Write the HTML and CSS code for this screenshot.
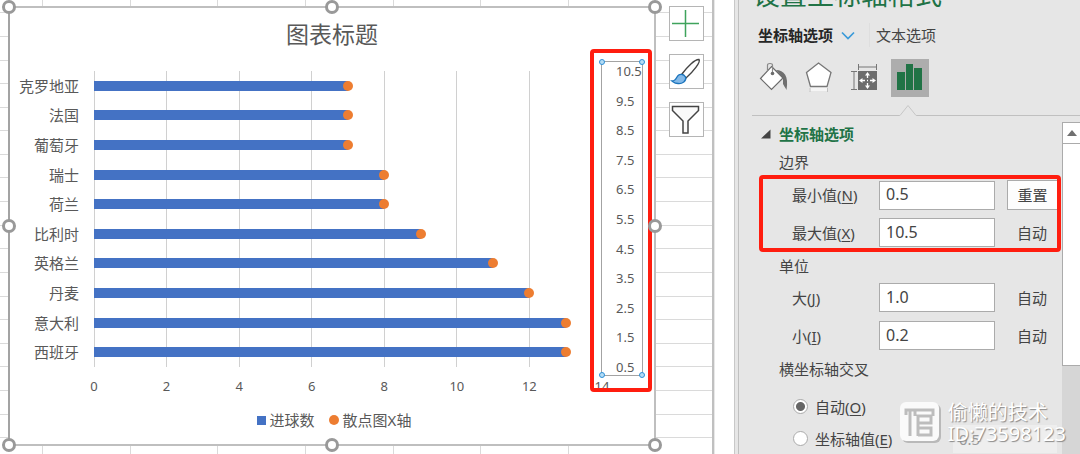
FILE: index.html
```html
<!DOCTYPE html>
<html lang="zh-CN">
<head>
<meta charset="utf-8">
<title>设置坐标轴格式</title>
<link rel="stylesheet" href="styles.css">
</head>
<body>
<main class="sheet">
  <svg class="sheet-lines" aria-hidden="true">
    <path d="M0 12.500h2000M0 36.500h2000M0 60.500h2000M0 83.500h2000M0 107.500h2000M0 130.500h2000M0 154.500h2000M0 177.500h2000M0 201.500h2000M0 225.500h2000M0 248.500h2000M0 272.500h2000M0 296.500h2000M0 319.500h2000M0 343.500h2000M0 366.500h2000M0 390.500h2000M0 414.500h2000M0 437.500h2000M42.500 0v2000M130.500 0v2000M217.500 0v2000M305.500 0v2000M393.500 0v2000M480.500 0v2000M568.500 0v2000"/>
  </svg>
  <section class="chart">
    <h2 class="chart-title">图表标题</h2>
    <div class="plot-row">
      <div class="categories">
        <span>克罗地亚</span><span>法国</span><span>葡萄牙</span><span>瑞士</span><span>荷兰</span>
        <span>比利时</span><span>英格兰</span><span>丹麦</span><span>意大利</span><span>西班牙</span>
      </div>
      <div class="plot">
        <div class="rules"><i></i><i></i><i></i><i></i><i></i><i></i><i></i><i></i></div>
        <div class="track"><div class="bar" style="width:50%"></div></div>
        <div class="track"><div class="bar" style="width:50%"></div></div>
        <div class="track"><div class="bar" style="width:50%"></div></div>
        <div class="track"><div class="bar" style="width:57.143%"></div></div>
        <div class="track"><div class="bar" style="width:57.143%"></div></div>
        <div class="track"><div class="bar" style="width:64.286%"></div></div>
        <div class="track"><div class="bar" style="width:78.571%"></div></div>
        <div class="track"><div class="bar" style="width:85.714%"></div></div>
        <div class="track"><div class="bar" style="width:92.857%"></div></div>
        <div class="track"><div class="bar" style="width:92.857%"></div></div>
      </div>
      <div class="value-axis">
        <span>10.5</span><span>9.5</span><span>8.5</span><span>7.5</span><span>6.5</span><span>5.5</span><span>4.5</span><span>3.5</span><span>2.5</span><span>1.5</span><span>0.5</span>
        <div class="axis-selection"><i class="dot tl"></i><i class="dot tr"></i><i class="dot bl"></i><i class="dot br"></i></div>
        <div class="axis-frame"></div>
      </div>
    </div>
    <div class="x-axis"><span>0</span><span>2</span><span>4</span><span>6</span><span>8</span><span>10</span><span>12</span><span>14</span></div>
    <div class="legend">
      <span class="key"><i class="swatch square"></i>进球数</span>
      <span class="key"><i class="swatch round"></i>散点图X轴</span>
    </div>
    <i class="handle top left"></i><i class="handle top center"></i><i class="handle top right"></i>
    <i class="handle middle left"></i><i class="handle middle right"></i>
    <i class="handle bottom left"></i><i class="handle bottom center"></i><i class="handle bottom right"></i>
  </section>
  <div class="chart-tools">
    <button type="button" aria-label="图表元素"><svg width="33" height="33" viewBox="0 0 33 33"><path d="M15.500 3v27M2 16.500h27" stroke="#3fa35c" stroke-width="1.500"/></svg></button>
    <button type="button" aria-label="图表样式"><svg width="33" height="33" viewBox="0 0 33 33"><path d="M12 19C17 12 25 4 29 4.500C31 7 23 17 16 23Z" fill="#fff" stroke="#444" stroke-width="1.400"/><path d="M2 26C5 26 6 24 7 22C9 18 14 19 15.500 22C17 26 12 29 8 28.500C5 28.500 4 27.500 2 26Z" fill="#83b9e8" stroke="#1b74bc" stroke-width="1.300"/></svg></button>
    <button type="button" aria-label="图表筛选器"><svg width="33" height="33" viewBox="0 0 33 33"><path d="M2.500 3.500h26v4L18 18v12h-5V18L2.500 7.500Z" fill="#fafafa" stroke="#444" stroke-width="1.500"/></svg></button>
  </div>
</main>
<div class="splitter"></div>
<aside class="panel">
  <h1 class="panel-title">设置坐标轴格式</h1>
  <nav class="tabs">
    <button type="button" class="tab active">坐标轴选项<svg width="14" height="9" viewBox="0 0 14 9"><path d="M1 1.500L7 7.500L13 1.500" fill="none" stroke="#3a9ad9" stroke-width="1.700"/></svg></button>
    <button type="button" class="tab">文本选项</button>
  </nav>
  <div class="icon-tabs">
    <button type="button" aria-label="填充与线条"><svg width="38" height="38" viewBox="0 0 38 38"><path d="M17 11C25 11 30 17 27.500 31C26 28 25 27 24 25L24 19Z" fill="#707070"/><path d="M12.500 7.500L24 19L12.500 30.500L1.500 19.500Z" fill="#fff" stroke="#6b6b6b" stroke-width="1.200"/><path d="M8.500 12V6C8.500 4 13.500 4 13.500 6V14" fill="none" stroke="#8a8a8a" stroke-width="1.200"/><circle cx="13.500" cy="14.500" r="1.800" fill="#6b6b6b"/></svg></button>
    <button type="button" aria-label="效果"><svg width="38" height="38" viewBox="0 0 38 38"><path d="M7 28H24L25 32H6Z" fill="#f5f5f5"/><path d="M15.500 4L28 13.500L24 27.500H7.500L3.500 13.500Z" fill="#fff" stroke="#777" stroke-width="1.300"/><path d="M7 29v4M24.500 29v4" stroke="#c0c0c0"/></svg></button>
    <button type="button" aria-label="大小与属性"><svg width="38" height="38" viewBox="0 0 38 38"><path d="M11.500 5v6M29.500 5v6M11.500 8h18M4 12.500h6M4 30.500h6M7 12.500v18" fill="none" stroke="#777"/><path d="M11 12h19v19H11Z" fill="#6d6d6d"/><path d="M20.500 15v4M20.500 24v4M14 21.500h4M23 21.500h4M20 21.500h1" fill="none" stroke="#fff" stroke-width="1.300"/><path d="M20.500 13l2.500 3.500h-5ZM20.500 30l2.500-3.500h-5ZM12 21.500l3.500-2.500v5ZM29 21.500l-3.500-2.500v5Z" fill="#fff"/></svg></button>
    <button type="button" class="selected" aria-label="坐标轴选项"><svg width="38" height="38" viewBox="0 0 38 38"><path d="M6 13h8v18H6ZM15 5h7v26h-7ZM23 9h8v22h-8Z" fill="#217346"/></svg></button>
  </div>
  <div class="divider"><i></i><svg width="18" height="12" viewBox="0 0 18 12"><path d="M0 11.500H1L9 1.500L17 11.500H18" fill="#e6e6e6" stroke="#c6c6c6"/></svg><i class="rest"></i></div>
  <div class="panel-body">
    <form class="options">
      <h3 class="section"><svg width="10" height="10" viewBox="0 0 10 10"><path d="M9.500 .500V9.500H0Z" fill="#444"/></svg>坐标轴选项</h3>
      <h4 class="group-title">边界</h4>
      <div class="fields marked">
        <div class="field"><label for="min">最小值(<u>N</u>)</label><input id="min" type="text" value="0.5"><button type="button" class="reset">重置</button></div>
        <div class="field"><label for="max">最大值(<u>X</u>)</label><input id="max" type="text" value="10.5"><span class="auto">自动</span></div>
      </div>
      <h4 class="group-title">单位</h4>
      <div class="fields">
        <div class="field"><label for="major">大(<u>J</u>)</label><input id="major" type="text" value="1.0"><span class="auto">自动</span></div>
        <div class="field"><label for="minor">小(<u>I</u>)</label><input id="minor" type="text" value="0.2"><span class="auto">自动</span></div>
      </div>
      <h4 class="group-title">横坐标轴交叉</h4>
      <div class="choices">
        <div class="choice"><input id="cross-auto" type="radio" name="cross" checked><label for="cross-auto">自动(<u>O</u>)</label></div>
        <div class="choice"><input id="cross-value" type="radio" name="cross"><label for="cross-value">坐标轴值(<u>E</u>)</label><input class="cross-input" type="text" value="0.5" aria-label="坐标轴值" disabled></div>
      </div>
    </form>
    <div class="scrollbar">
      <button type="button" aria-label="向上滚动"><svg width="10" height="6" viewBox="0 0 10 6"><path d="M5 0L10 6H0Z" fill="#707070"/></svg></button>
      <div class="thumb"></div>
    </div>
  </div>
</aside>
<div class="watermark">
  <svg width="42" height="42" viewBox="0 0 42 42"><rect x="2" y="2" width="39" height="39" rx="6" fill="#b9b9b9"/><rect x="0" y="0" width="39" height="39" rx="6" fill="#fafafa"/><path d="M6 13V8H14M10 8V34M15 14V8H33V14M18 34V14H31V21H18M18 26H31V33H18" fill="none" stroke="#bdbdbd" stroke-width="3"/></svg>
  <div><p>偷懒的技术</p><p>ID:73598123</p></div>
</div>
</body>
</html>
```

FILE: styles.css
```css
* { box-sizing: border-box; }
body {
  margin: 0;
  display: flex;
  height: 100vh;
  overflow: hidden;
  position: relative;
  background: #fff;
  color: #444;
  font: 15px/24px "Noto Sans", "Noto Sans CJK SC", sans-serif;
}
h1, h2, h3, h4, p { margin: 0; font-weight: 400; }
button, input { font: inherit; color: inherit; margin: 0; padding: 0; }
button { border: 0; background: none; }
svg { display: block; }
u { text-underline-offset: 2px; }

/* Worksheet and chart */
.sheet {
  flex: 1;
  position: relative;
  display: flex;
  gap: 13px;
  padding: 6px 8px 8px;
}
.sheet-lines { position: absolute; inset: 0; width: 100%; height: 100%; }
.sheet-lines path { stroke: #dadada; fill: none; }
.chart {
  flex: 1;
  position: relative;
  display: flex;
  flex-direction: column;
  padding: 10px 0 12px;
  background: #fff;
  border: 2px solid #bfbfbf;
  border-left-color: #a3a3a3;
  color: #595959;
}
.chart-title { font-size: 23px; line-height: 32px; text-align: center; }
.plot-row { flex: 1; display: flex; margin-top: 21px; }
.categories { width: 84px; padding-right: 15px; display: flex; flex-direction: column; text-align: right; }
.categories span { flex: 1; display: flex; align-items: center; justify-content: flex-end; }
.plot { flex: 1; position: relative; display: flex; flex-direction: column; }
.rules { position: absolute; inset: 0; display: flex; justify-content: space-between; }
.rules i { width: 1px; background: #d0d0d0; }
.track { flex: 1; display: flex; align-items: center; }
.bar { position: relative; height: 10px; background: #4472c4; }
.bar::after {
  content: "";
  position: absolute;
  right: -5px;
  top: 0;
  width: 10px;
  height: 10px;
  border-radius: 50%;
  background: #ed7d31;
}
.value-axis {
  width: 52px;
  padding-left: 14px;
  position: relative;
  display: flex;
  flex-direction: column;
  justify-content: space-between;
  font-size: 13px;
}
.value-axis span { height: 0; line-height: 0; }
.axis-selection { position: absolute; inset: -10px 11px -9px -1px; border: 1px solid #a3a3a3; }
.dot { position: absolute; width: 6px; height: 6px; border: 1px solid #2e8fd6; border-radius: 50%; background: #b5dcf5; }
.dot.tl, .dot.tr { top: -3px; }
.dot.bl, .dot.br { bottom: -3px; }
.dot.tl, .dot.bl { left: -3px; }
.dot.tr, .dot.br { right: -3px; }
.axis-frame { position: absolute; inset: -22px 2px -25px -12px; border: 4px solid #ff1d0f; border-radius: 4px; }
.x-axis {
  display: flex;
  justify-content: space-between;
  margin: 10px 52px 0 84px;
  font-size: 13px;
  line-height: 18px;
}
.x-axis span { width: 0; display: flex; justify-content: center; }
.legend { display: flex; justify-content: center; gap: 14px; margin-top: 13px; padding-left: 4px; }
.key { display: flex; align-items: center; gap: 4px; }
.swatch { width: 9px; height: 9px; background: #4472c4; }
.swatch.round { width: 10px; height: 10px; border-radius: 50%; background: #ed7d31; }
.handle { position: absolute; width: 14px; height: 14px; border: 3px solid #999; border-radius: 50%; background: #fff; }
.handle.top { top: -8px; }
.handle.bottom { bottom: -8px; }
.handle.middle { top: calc(50% - 7px); }
.handle.left { left: -8px; }
.handle.right { right: -8px; }
.handle.center { left: calc(50% - 7px); }
.chart-tools { position: relative; display: flex; flex-direction: column; gap: 13px; }
.chart-tools button { width: 35px; height: 35px; border: 1px solid #b5b5b5; background: #fff; }
.splitter { width: 27px; border: solid #c0c0c0; border-width: 0 1px 0 2px; background: linear-gradient(to right, #e8e8e8 1px, #fff 1px, #fff calc(100% - 4px), #c8c8c8 calc(100% - 4px), #c8c8c8 calc(100% - 3px), #e6e6e6 calc(100% - 3px)); }

/* Format pane */
.panel { width: 341px; display: flex; flex-direction: column; background: #e6e6e6; }
.panel-title { margin-top: -23px; padding-left: 14px; font-size: 27px; line-height: 36px; color: #217346; }
.tabs { display: flex; margin-top: 10px; padding-left: 19px; }
.tab { display: flex; align-items: center; gap: 8px; }
.tab.active { font-weight: 700; color: #262626; padding-right: 14px; margin-right: 6px; border-right: 1px solid #dedede; }
.icon-tabs { display: flex; gap: 6px; margin-top: 12px; padding-left: 20px; }
.icon-tabs button { width: 38px; height: 38px; }
.icon-tabs .selected { background: #adadad; }
.divider { display: flex; align-items: flex-end; margin: 7px 0 0 13px; }
.divider i { width: 147px; height: 1px; background: #c0c0c0; }
.divider .rest { flex: 1; }
.panel-body { flex: 1; min-height: 0; display: flex; margin-top: 6px; }
.options { flex: 1; padding-right: 1px; }
.section { display: flex; align-items: center; gap: 8px; margin-bottom: 2px; padding-left: 22px; font-size: 15px; font-weight: 700; color: #217346; }
.group-title { margin-top: 2px; padding-left: 40px; font-size: 15px; }
.section + .group-title { margin-top: 4px; }
.section { margin-bottom: 0; }
.fields { display: flex; flex-direction: column; gap: 9px; margin-left: 20px; padding: 1px 0; border: 4px solid transparent; }
.fields.marked { margin-top: 1px; border-color: #ff1d0f; border-radius: 4px; }
.field { display: grid; grid-template-columns: 87px 1fr 50px; align-items: center; padding-left: 29px; height: 29px; }
.field input { width: calc(100% - 12px); height: 29px; padding: 0 6px 2px; border: 1px solid #ababab; background: #fff; font-size: 16px; }
.reset { height: 30px; border: 1px solid #ababab; border-right: 0; background: #fdfdfd; }
.auto { text-align: center; }
.choices { display: flex; flex-direction: column; gap: 3px; padding-left: 54px; margin-top: 11px; }
.choice { display: flex; align-items: center; gap: 7px; height: 29px; }
.choice input[type="radio"] { appearance: none; width: 15px; height: 15px; border: 1px solid #ababab; border-radius: 50%; background: #fff; }
.choice input[type="radio"]:checked { background: radial-gradient(circle, #666 4px, #fff 5px); }
.cross-input { width: 104px; height: 28px; margin: 0 4px 0 auto; padding: 0 6px; border: 0; background: #eee; color: #999; }
.scrollbar { width: 18px; background: #d6d6d6; }
.scrollbar button { display: grid; place-items: center; width: 100%; height: 22px; border: 1px solid #ababab; border-right: 0; background: #fff; }
.thumb { height: 67%; background: #fff; border: solid #ababab; border-width: 0 0 1px 1px; }

.watermark { position: absolute; right: 14px; bottom: 10px; display: flex; align-items: center; gap: 6px; color: #fff; font-size: 20px; line-height: 21px; text-shadow: 1px 1px 1px #888; }
```
